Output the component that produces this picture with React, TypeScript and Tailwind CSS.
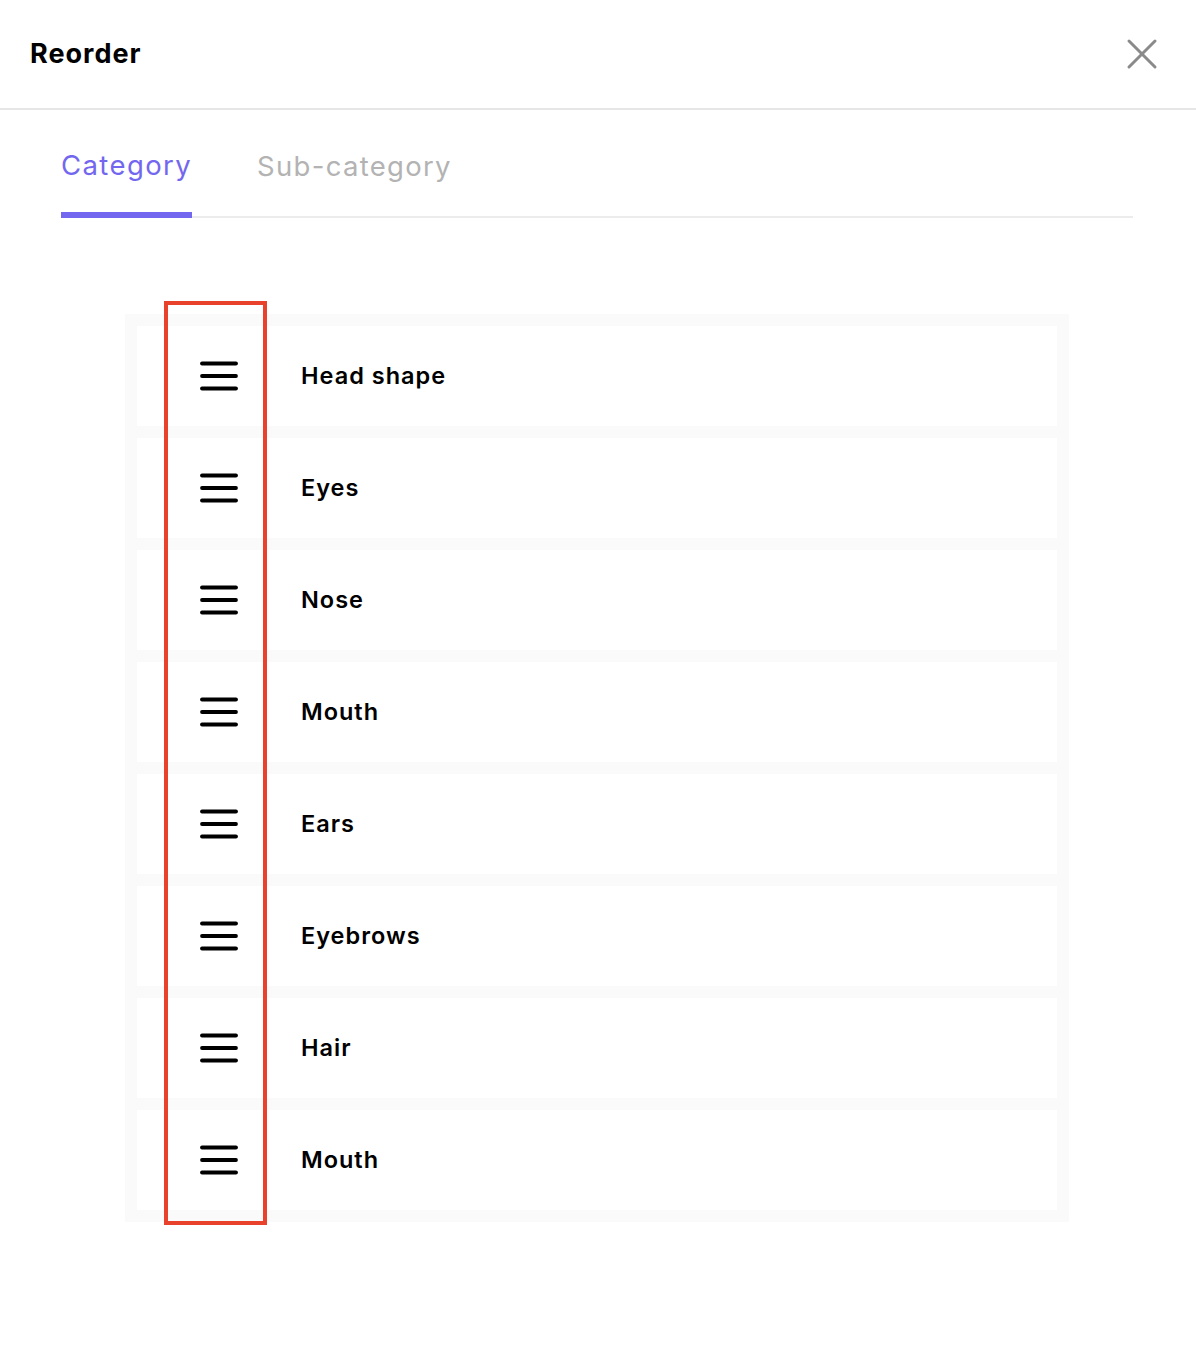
import { useState } from "react";

const items = ["Head shape", "Eyes", "Nose", "Mouth", "Ears", "Eyebrows", "Hair", "Mouth"];

function DragHandle() {
  return (
    <svg width="40" height="32" viewBox="0 0 40 32" className="shrink-0" aria-hidden>
      <g stroke="#000" strokeWidth="3.8" strokeLinecap="round">
        <line x1="3" y1="3.5" x2="37" y2="3.5" />
        <line x1="3" y1="16" x2="37" y2="16" />
        <line x1="3" y1="28.5" x2="37" y2="28.5" />
      </g>
    </svg>
  );
}

export default function App() {
  const [tab, setTab] = useState<"category" | "sub">("category");

  return (
    <div className="min-h-[1346px] w-[1196px] bg-white font-['Inter',sans-serif] text-black">
      <header className="flex h-[110px] items-center justify-between border-b-2 border-[#e6e6e6] pl-[30px] pr-[38px]">
        <h1 className="text-[27px] font-bold tracking-[1px]">Reorder</h1>
        <button className="flex h-8 w-8 items-center justify-center" aria-label="Close">
          <svg width="32" height="32" viewBox="0 0 32 32">
            <g stroke="#8a8a8a" strokeWidth="3" strokeLinecap="round">
              <line x1="3" y1="3" x2="29" y2="29" />
              <line x1="29" y1="3" x2="3" y2="29" />
            </g>
          </svg>
        </button>
      </header>

      <div className="ml-[61px] mr-[63px] flex gap-[65px] border-b-2 border-[#ececec] pt-[33px]">
        <button
          onClick={() => setTab("category")}
          className={`-mb-[2px] border-b-[6px] pb-[26px] text-[27.5px] leading-[40px] tracking-[1.4px] ${
            tab === "category" ? "border-[#7367f0] text-[#7367f0]" : "border-transparent text-[#b3b3b3]"
          }`}
        >
          Category
        </button>
        <button
          onClick={() => setTab("sub")}
          className={`-mb-[2px] border-b-[6px] pb-[26px] pt-[3px] text-[27.5px] leading-[40px] tracking-[1.3px] ${
            tab === "sub" ? "border-[#7367f0] text-[#7367f0]" : "border-transparent text-[#b3b3b3]"
          }`}
        >
          Sub-category
        </button>
      </div>

      <div className="relative ml-[125px] mt-[96px] w-[944px] bg-[#fafafa] p-3">
        <div className="flex flex-col gap-3">
          {items.map((name, i) => (
            <div key={i} className="flex h-[100px] items-center bg-white pl-[62px]">
              <DragHandle />
              <span className="ml-[62px] text-[23.5px] font-semibold tracking-[1px]">{name}</span>
            </div>
          ))}
        </div>
        <div className="pointer-events-none absolute left-[39px] top-[-13px] h-[924px] w-[103px] border-4 border-[#e8412c]" />
      </div>
    </div>
  );
}
